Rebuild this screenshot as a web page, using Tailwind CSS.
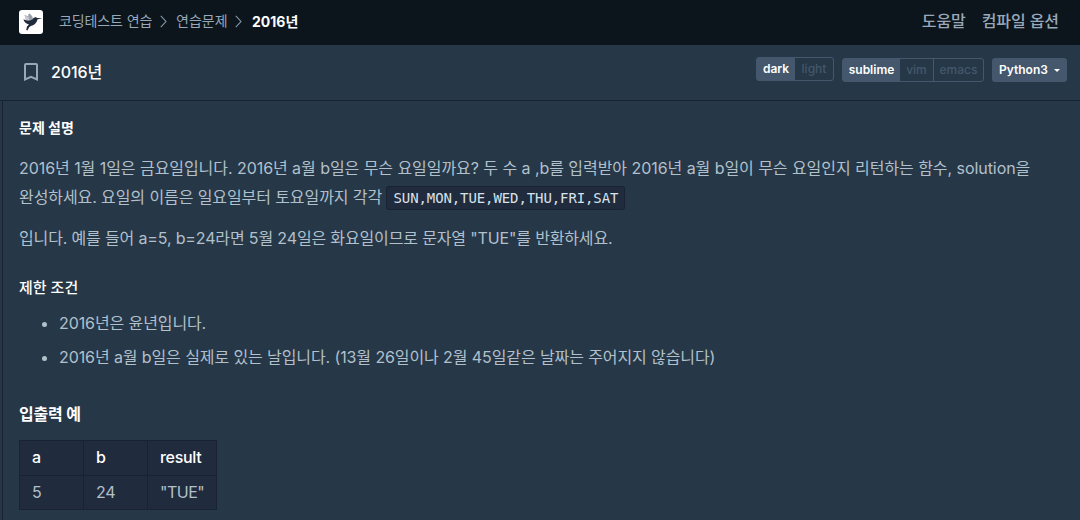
<!DOCTYPE html>
<html lang="ko">
<head>
  <meta charset="UTF-8" />
  <meta name="viewport" content="width=device-width,initial-scale=1" />
  <title>코딩테스트 연습 - 2016년</title>
  <script src="https://cdn.jsdelivr.net/npm/@tailwindcss/browser@4"></script>
</head>
<body class="h-[520px] overflow-hidden bg-[#263747] font-['Inter','Noto_Sans_CJK_KR',sans-serif] text-[#b2c0cc]">
  <div class="flex h-full flex-col whitespace-nowrap">
    <!-- 상단 메뉴 -->
    <header class="flex h-[45px] shrink-0 items-center justify-between bg-[#0c151c] pb-0.5 pl-[19px] pr-[21px]">
      <nav class="flex items-center text-sm leading-6 text-[#98a8b9]">
        <a href="#" class="mr-4 block h-6 w-6 rounded-[3px] bg-white">
          <svg class="h-6 w-6" viewBox="0 0 24 24">
            <path fill="#9a9fa8" d="M5.500 5 9.300 6.600 9.200 4.600l1.600-1.200 2.600 3 .6 3.400-3.400 1.400-3.600-1.200z" />
            <path fill="#c9cdd3" d="m5.500 5 4 2.200 1.300 3-3.600-.6z" />
            <path fill="#1f2a3c" d="M4.400 9.300c3.200 1.500 6.400 1.900 9 .3 1-1.700 2.200-2.500 3.800-2.200l1.500.7 4.700.2-4.800 1c-.4 1.300-.9 2.600-1.800 3.700-1.200 1.700-3 2.500-5 2.900l-1.700 1.300-1.700 3.300-1.200-.4.800-3.700 2-1.900c-2.700-.500-4.800-2.500-5.600-5.200z" />
          </svg>
        </a>
        <a href="#" class="-mt-0.5 w-[94px] tracking-[-0.1px]">코딩테스트 연습</a>
        <svg class="ml-[7px] mr-[9px] h-[13px] w-[7px]" viewBox="0 0 7 13" fill="none" stroke="#8499a9" stroke-width="1.1"><path d="m.8.8 5.200 5.700L.8 12.200" /></svg>
        <a href="#" class="-mt-0.5 w-[51px]">연습문제</a>
        <svg class="ml-2 mr-2.5 h-[13px] w-[7px]" viewBox="0 0 7 13" fill="none" stroke="#8499a9" stroke-width="1.1"><path d="m.8.8 5.200 5.700L.8 12.200" /></svg>
        <span class="font-bold text-white">2016년</span>
      </nav>
      <div class="-mt-0.5 flex gap-4 text-base font-medium leading-6 tracking-[-0.1px] text-[#98a8b9]">
        <a href="#">도움말</a>
        <a href="#">컴파일 옵션</a>
      </div>
    </header>

    <!-- 문제 제목, 에디터 설정 -->
    <div class="flex h-14 shrink-0 items-center justify-between border-b border-[#172334] pl-6 pr-[13px]">
      <div class="-mt-0.5 flex items-center">
        <svg class="mr-[13px] h-[18px] w-3.5" viewBox="0 0 14 18" fill="none" stroke="#98a8b9" stroke-width="2"><path d="M1 2a1 1 0 0 1 1-1h10a1 1 0 0 1 1 1v14.500l-6-2.600-6 2.600z" /></svg>
        <h1 class="text-base font-medium leading-6 tracking-[-0.1px] text-white">2016년</h1>
      </div>
      <div class="mb-1.5 flex h-[25px] gap-2 text-xs font-medium leading-[22px]">
        <div class="flex h-6 w-[78px] rounded-[3px] border border-[#44576c]">
          <span class="w-[38px] bg-[#44576c] text-center font-semibold text-white">dark</span>
          <span class="flex-1 text-center text-[#44576c]">light</span>
        </div>
        <div class="mt-px flex h-6 w-[142px] rounded-[3px] border border-[#44576c]">
          <span class="w-[57px] bg-[#44576c] text-center font-semibold text-white">sublime</span>
          <span class="w-[34px] border-r border-[#44576c] text-center text-[#44576c]">vim</span>
          <span class="flex-1 text-center text-[#44576c]">emacs</span>
        </div>
        <button class="mt-px flex h-6 w-[75px] items-center rounded-[3px] bg-[#44576c] pl-[7px] font-semibold text-white">
          Python3
          <span class="ml-1.5 border-x-[3px] border-t-[3px] border-x-transparent border-t-white"></span>
        </button>
      </div>
    </div>

    <main class="ml-0.5 flex-1 border-l border-[#172334] pl-4 text-base leading-[29px]">
      <h6 class="mt-[17px] text-sm font-bold leading-5 text-white">문제 설명</h6>
      <div class="mt-4">
        <p class="tracking-[-0.055px]">2016년 1월 1일은 금요일입니다. 2016년 a월 b일은 무슨 요일일까요? 두 수 a ,b를 입력받아 2016년 a월 b일이 무슨 요일인지 리턴하는 함수, solution을<br><span class="tracking-[-0.09px]">완성하세요. 요일의 이름은 일요일부터 토요일까지 각각 </span><code class="rounded-[3px] border border-[#172334] bg-[#202b3d] px-1.5 py-[3px] font-['DejaVu_Sans_Mono',monospace] text-sm leading-none tracking-[-0.1px] text-[#d7e2eb]">SUN,MON,TUE,WED,THU,FRI,SAT</code></p>
        <p class="mt-3 tracking-[-0.15px]">입니다. 예를 들어 a=5, b=24라면 5월 24일은 화요일이므로 문자열 "TUE"를 반환하세요.</p>
      </div>
      <h5 class="mt-[25px] text-[15px] font-medium leading-5 text-white">제한 조건</h5>
      <ul class="mt-[13px] list-disc pl-10 leading-6 tracking-[-0.1px]">
        <li>2016년은 윤년입니다.</li>
        <li class="mt-2.5">2016년 a월 b일은 실제로 있는 날입니다. (13월 26일이나 2월 45일같은 날짜는 주어지지 않습니다)</li>
      </ul>
      <h4 class="mt-[33px] text-base font-bold leading-6 tracking-[-0.2px] text-white">입출력 예</h4>
      <table class="mt-3.5 w-[198px] table-fixed border-collapse bg-[#202b3d] text-left leading-6 tracking-[-0.3px]">
        <thead>
          <tr class="h-[35px] text-white">
            <th class="w-16 border border-[#172334] px-3 pb-0.5 font-medium">a</th>
            <th class="w-16 border border-[#172334] px-3 pb-0.5 font-medium">b</th>
            <th class="border border-[#172334] px-3 pb-0.5 font-medium">result</th>
          </tr>
        </thead>
        <tbody>
          <tr class="h-[34px]">
            <td class="border border-[#172334] px-3 pb-0.5">5</td>
            <td class="border border-[#172334] px-3 pb-0.5">24</td>
            <td class="border border-[#172334] px-3 pb-0.5 tracking-[-0.5px]">"TUE"</td>
          </tr>
        </tbody>
      </table>
    </main>
  </div>
</body>
</html>
